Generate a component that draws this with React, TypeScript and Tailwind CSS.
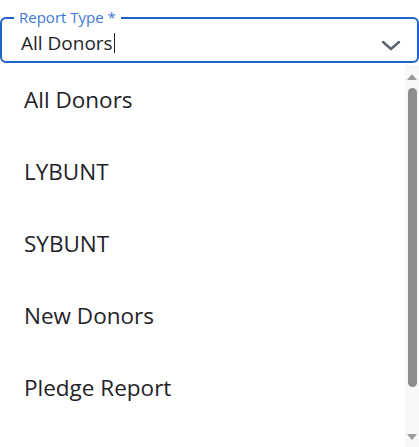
import React from "react";

const items = ["All Donors", "LYBUNT", "SYBUNT", "New Donors", "Pledge Report"];

export default function App() {
  return (
    <div className="w-[419px] h-[447px] bg-white overflow-hidden flex flex-col" style={{ fontFamily: '"Open Sans", "Liberation Sans", sans-serif' }}>
      <div className="pt-[17px]">
        <div className="relative h-[46px] border-2 border-[#1f62c9] rounded-[6px] flex items-center pl-[19px] pr-[16px]">
          <span className="absolute top-[-12px] left-[12px] px-[5px] bg-white text-[15px] leading-[20px] text-[#3b78d6]">
            Report Type *
          </span>
          <div className="flex-1 flex items-center pt-[6px] text-[19px] leading-[24px] text-[#1f2328]">
            <span>All Donors</span>
            <span className="w-px h-[20px] bg-[#1f2328] ml-[1px]" />
          </div>
          <svg width="20" height="11" viewBox="0 0 20 11" className="mt-[10px]">
            <path d="M2 2 L10 9 L18 2" fill="none" stroke="#5a6270" strokeWidth="2.4" strokeLinecap="round" strokeLinejoin="round" />
          </svg>
        </div>
      </div>
      <div className="flex flex-1 min-h-0">
        <div className="flex-1 flex flex-col pt-[1px]">
          {items.map((t) => (
            <div key={t} className="h-[72px] flex items-center pl-[24px] text-[22.5px] text-[#1f2328]">
              {t}
            </div>
          ))}
        </div>
        <div className="w-[14px] bg-[#f8f8f8] flex flex-col items-center pt-[9px] mt-[2px]">
          <svg width="10" height="6" viewBox="0 0 10 6">
            <path d="M5 0 L10 6 L0 6 Z" fill="#9a9a9a" />
          </svg>
          <div className="w-[9px] h-[299px] mt-[8px] rounded-[5px] bg-[#8d8d8d]" />
          <svg width="10" height="6" viewBox="0 0 10 6" className="mt-[47px]">
            <path d="M0 0 L10 0 L5 6 Z" fill="#9a9a9a" />
          </svg>
        </div>
      </div>
    </div>
  );
}
